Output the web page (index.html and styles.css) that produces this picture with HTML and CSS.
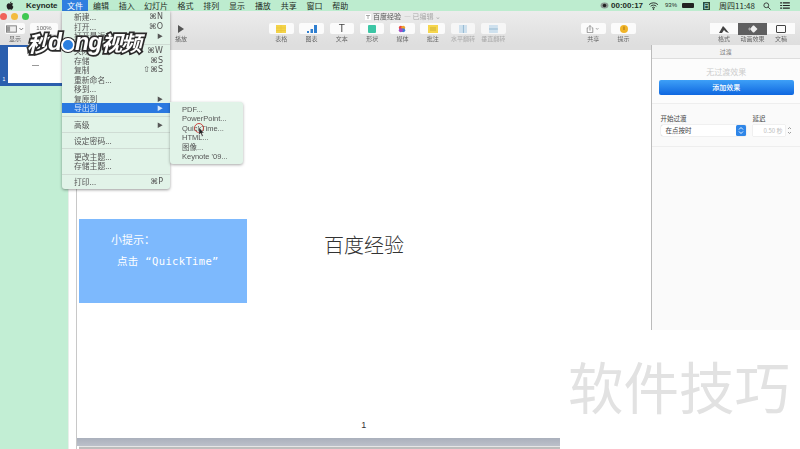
FILE: index.html
```html
<!DOCTYPE html>
<html lang="zh">
<head>
<meta charset="utf-8">
<title>Keynote</title>
<link rel="stylesheet" href="styles.css">
</head>
<body>
<div class="screen">
  <header class="menubar">
    <svg class="apple" viewBox="0 0 10 12"><path d="M7 0.5c0 1.2-1 2.2-2 2.2C5 1.5 6 .6 7 .5zM5 3.3c.6 0 1.2-.5 2.1-.5.8 0 1.5.4 2 1-1.500 1-1.300 3 .4 3.800C9 9.500 8 11.500 6.900 11.500c-.7 0-1-.4-1.800-.4s-1.100.4-1.800.4C2 11.500.5 9 .5 6.800.5 4.500 2 2.900 3.400 2.900c.7 0 1.200.4 1.600.4z"/></svg>
    <b class="app-name">Keynote</b>
    <span class="menu-title is-open">文件</span>
    <span class="menu-title">编辑</span>
    <span class="menu-title">插入</span>
    <span class="menu-title">幻灯片</span>
    <span class="menu-title">格式</span>
    <span class="menu-title">排列</span>
    <span class="menu-title">显示</span>
    <span class="menu-title">播放</span>
    <span class="menu-title">共享</span>
    <span class="menu-title">窗口</span>
    <span class="menu-title">帮助</span>
    <div class="status">
      <svg class="st-rec" viewBox="0 0 10 8"><ellipse cx="5" cy="4" rx="4.500" ry="3.500" fill="#8a9a92"/><circle cx="5" cy="4" r="2" fill="#222"/></svg>
      <b class="st-time">00:00:17</b>
      <svg class="st-wifi" viewBox="0 0 12 9"><path d="M1 3a7 7 0 0 1 10 0M2.800 4.800a4.500 4.500 0 0 1 6.400 0M4.500 6.500a2.200 2.200 0 0 1 3 0" fill="none" stroke="#222" stroke-width="1"/><circle cx="6" cy="8" r=".9" fill="#222"/></svg>
      <span class="st-pct">93%</span>
      <span class="st-batt"></span>
      <span class="st-box">日</span>
      <span class="st-clock">周四11:48</span>
      <svg class="st-search" viewBox="0 0 9 9"><circle cx="3.700" cy="3.700" r="2.700" fill="none" stroke="#333"/><path d="M5.700 5.700L8.500 8.500" stroke="#333"/></svg>
      <svg class="st-list" viewBox="0 0 11 8"><path d="M0 1h2M3 1h8M0 4h2M3 4h8M0 7h2M3 7h8" stroke="#222" stroke-width="1.200"/></svg>
    </div>
  </header>

  <section class="toolbar">
    <div class="lights"><i class="light red"></i><i class="light amber"></i><i class="light green"></i></div>
    <div class="doc-title"><svg class="doc-icon" viewBox="0 0 6 6"><rect width="6" height="6" fill="#fff"/><path d="M1 1.500h4M3 1.500v3.500" stroke="#888" stroke-width=".7"/></svg><span class="doc-name">百度经验</span><span class="doc-state"> — 已编辑 ⌄</span></div>
    <div class="tools">
      <div class="tool tool-view"><span class="btn"><svg class="ic" viewBox="0 0 20 8"><rect x=".5" y=".5" width="11" height="7" fill="#eee" stroke="#777"/><rect x="1" y="1" width="3.500" height="6" fill="#999"/><path d="M15 3l2 2 2-2" fill="none" stroke="#666"/></svg></span><small>显示</small></div>
      <div class="tool tool-zoom"><span class="btn">100%</span><small>缩放</small></div>
      <div class="tool tool-play"><span class="btn plain"><svg class="ic" viewBox="0 0 8 8"><path d="M1 0l6 4-6 4z" fill="#555"/></svg></span><small>播放</small></div>
      <div class="group group-insert">
        <div class="tool"><span class="btn"><svg class="ic" viewBox="0 0 10 8"><rect width="10" height="8" fill="#f3d34a"/><path d="M0 3h10M0 5.500h10M5 0v8" stroke="#e9c233" stroke-width=".6"/></svg></span><small>表格</small></div>
        <div class="tool"><span class="btn"><svg class="ic" viewBox="0 0 10 8"><rect x="0" y="6" width="2" height="2" fill="#2f7fd0"/><rect x="3.500" y="4" width="2.500" height="4" fill="#2f7fd0"/><rect x="7" y="0" width="3" height="8" fill="#2f7fd0"/></svg></span><small>图表</small></div>
        <div class="tool"><span class="btn glyph">T</span><small>文本</small></div>
        <div class="tool"><span class="btn"><svg class="ic" viewBox="0 0 8 8"><rect width="8" height="8" rx="1" fill="#3cc6a5"/></svg></span><small>形状</small></div>
        <div class="tool"><span class="btn"><svg class="ic" viewBox="0 0 10 10"><circle cx="3.500" cy="3.500" r="2.500" fill="#e8483a"/><circle cx="6.500" cy="3.500" r="2.500" fill="#f0a12c"/><circle cx="6.500" cy="6.500" r="2.500" fill="#3d7fd6"/><circle cx="3.500" cy="6.500" r="2.500" fill="#a24bc8"/></svg></span><small>媒体</small></div>
        <div class="tool"><span class="btn"><svg class="ic" viewBox="0 0 10 8"><rect width="10" height="8" fill="#f6d64e"/><path d="M2 3h6M2 5h6" stroke="#b79c2a" stroke-width=".6"/></svg></span><small>批注</small></div>
        <div class="tool dim"><span class="btn"><svg class="ic" viewBox="0 0 10 9"><rect width="10" height="9" fill="#cfe1ee"/><path d="M5 0v9" stroke="#8fb4cf"/></svg></span><small>水平翻转</small></div>
        <div class="tool dim"><span class="btn"><svg class="ic" viewBox="0 0 10 9"><rect width="10" height="9" fill="#cfe1ee"/><path d="M0 4.500h10" stroke="#8fb4cf"/></svg></span><small>垂直翻转</small></div>
      </div>
      <div class="group group-share">
        <div class="tool"><span class="btn"><svg class="ic" viewBox="0 0 18 10"><path d="M3 3.500h-1.500v6h7v-6H7M5 7V.8M3.500 2.200L5 .7l1.500 1.500" fill="none" stroke="#666" stroke-width=".8"/><path d="M12.500 4l1.500 1.500L15.500 4" fill="none" stroke="#666" stroke-width=".8"/></svg></span><small>共享</small></div>
        <div class="tool"><span class="btn"><svg class="ic" viewBox="0 0 8 8"><circle cx="4" cy="4" r="4" fill="#f0b429"/><path d="M4 1.500v3.500" stroke="#a5741a"/></svg></span><small>提示</small></div>
      </div>
      <div class="group group-seg">
        <div class="tool seg"><span class="btn"><svg class="ic" viewBox="0 0 10 8"><path d="M0 8l4-7 2 2 4 5-3-1-2-2-2 3z" fill="#444"/></svg></span><small>格式</small></div>
        <div class="tool seg is-on"><span class="btn"><svg class="ic" viewBox="0 0 10 8"><path d="M2 4l3-3.500h1L9.500 4 6 7.500H5z" fill="#eee"/><path d="M0 4l2-2v4z" fill="#aaa"/></svg></span><small>动画效果</small></div>
        <div class="tool seg"><span class="btn"><svg class="ic" viewBox="0 0 10 8"><rect x=".5" y=".5" width="9" height="7" rx=".5" fill="none" stroke="#444"/></svg></span><small>文稿</small></div>
      </div>
    </div>
  </section>

  <main class="workspace">
    <aside class="navigator">
      <div class="nav-selected">
        <span class="nav-num">1</span>
        <div class="thumb"><i class="thumb-line"></i></div>
      </div>
    </aside>
    <div class="gutter"></div>
    <div class="stage">
      <div class="slide">
        <div class="slide-row">
          <div class="tip">
            <p class="tip-head">小提示：</p>
            <p class="tip-body">点击 “QuickTime”</p>
          </div>
          <h1 class="slide-title">百度经验</h1>
        </div>
        <div class="slide-num">1</div>
      </div>
      <div class="band"></div>
      <div class="band-low"></div>
    </div>
    <aside class="inspector">
      <div class="insp-head">过渡</div>
      <div class="insp-effect">
        <p class="no-effect">无过渡效果</p>
        <div class="add-btn">添加效果</div>
      </div>
      <div class="insp-form">
        <div class="field field-start">
          <label>开始过渡</label>
          <div class="select"><span>在点按时</span><svg class="stepper" viewBox="0 0 10 11"><rect width="10" height="11" rx="1.500" fill="#2f86e8"/><path d="M3 4.500l2-2 2 2M3 6.500l2 2 2-2" fill="none" stroke="#fff" stroke-width=".9"/></svg></div>
        </div>
        <div class="field field-delay">
          <label>延迟</label>
          <div class="delay"><span class="delay-input">0.50 秒</span><svg class="delay-step" viewBox="0 0 5 11"><path d="M1 4l1.500-1.500L4 4M1 7l1.500 1.500L4 7" fill="none" stroke="#888" stroke-width=".8"/></svg></div>
        </div>
      </div>
    </aside>
  </main>

  <nav class="menu">
    <div class="item"><span>新建...</span><kbd>⌘N</kbd></div>
    <div class="item"><span>打开...</span><kbd>⌘O</kbd></div>
    <div class="item"><span>打开最近使用</span><em>▶</em></div>
    <hr>
    <div class="item"><span>关闭</span><kbd>⌘W</kbd></div>
    <div class="item"><span>存储</span><kbd>⌘S</kbd></div>
    <div class="item"><span>复制</span><kbd>⇧⌘S</kbd></div>
    <div class="item"><span>重新命名...</span></div>
    <div class="item"><span>移到...</span></div>
    <div class="item"><span>复原到</span><em>▶</em></div>
    <div class="item is-active"><span>导出到</span><em>▶</em></div>
    <hr>
    <div class="item"><span>高级</span><em>▶</em></div>
    <hr>
    <div class="item"><span>设定密码...</span></div>
    <hr>
    <div class="item"><span>更改主题...</span></div>
    <div class="item"><span>存储主题...</span></div>
    <hr>
    <div class="item"><span>打印...</span><kbd>⌘P</kbd></div>
  </nav>

  <nav class="submenu">
    <div class="sub-item">PDF...</div>
    <div class="sub-item">PowerPoint...</div>
    <div class="sub-item">QuickTime...</div>
    <div class="sub-item">HTML...</div>
    <div class="sub-item">图像...</div>
    <div class="sub-item">Keynote '09...</div>
  </nav>

  <div class="cursor-ring"></div>
  <svg class="cursor" viewBox="0 0 8 11"><path d="M1 0v9l2-2 1.500 3.500 1.500-.6L4.500 6.500H7z" fill="#222" stroke="#fff" stroke-width=".5"/></svg>

  <div class="logo"><span>秒</span><span class="logo-lat">d</span><i class="logo-play"></i><span class="logo-lat">ng</span><span class="logo-end">视频</span></div>

  <div class="watermark">软件技巧</div>
</div>
</body>
</html>
```

FILE: styles.css
```css
* { box-sizing: border-box; }
html, body { margin: 0; padding: 0; }
body {
  width: 800px;
  height: 449px;
  overflow: hidden;
  background: #fff;
  font-family: "Noto Sans CJK SC", "Liberation Sans", sans-serif;
}
p, h1 { margin: 0; font-weight: 400; }
.screen {
  position: relative;
  width: 800px;
  height: 449px;
  overflow: hidden;
  display: flex;
  flex-direction: column;
  filter: blur(0.35px);
}

/* menu bar */
.menubar {
  flex: none;
  height: 11px;
  background: #bdeccf;
  display: flex;
  align-items: center;
  font-size: 8px;
  line-height: 11px;
  color: #1f2d26;
  white-space: nowrap;
}
.apple { width: 8px; height: 9px; margin-left: 6px; flex: none; fill: #222; }
.app-name { margin-left: 12px; width: 36px; font: 700 8px/11px "Liberation Sans", sans-serif; color: #1d2a24; }
.menu-title { width: 25.800px; text-align: center; flex: none; }
.menu-title.is-open { background: #2f7fe0; color: #fff; width: 26px; }
.menu-title:nth-of-type(4) { width: 33px; }
.status { margin-left: auto; display: flex; align-items: center; height: 11px; }
.st-rec { width: 9px; height: 7px; }
.st-time { margin-left: 2px; font: 700 8px/11px "Liberation Sans", sans-serif; width: 32px; }
.st-wifi { width: 11px; height: 8px; margin-left: 5px; }
.st-pct { font: 6px/11px "Liberation Sans", sans-serif; margin-left: 6px; width: 16px; }
.st-batt { width: 12px; height: 5px; background: #222; border-radius: 1px; margin-left: 1px; }
.st-box { width: 7px; height: 8px; margin-left: 9px; background: #2c4a3c; color: #cfe; font-size: 6px; line-height: 8px; text-align: center; }
.st-clock { margin-left: 9px; font-size: 8px; width: 38px; }
.st-search { width: 8px; height: 8px; margin-left: 6px; }
.st-list { width: 10px; height: 7px; margin: 0 10px 0 9px; }

/* window toolbar */
.toolbar {
  position: relative;
  flex: none;
  height: 34px;
  background: linear-gradient(#ececec, #dedede);
  padding-top: 12px;
}
.lights { position: absolute; left: 0; top: 2px; display: flex; gap: 4px; }
.light { width: 7px; height: 7px; border-radius: 50%; }
.light.red { background: #f0625a; }
.light.amber { background: #f3bb3e; }
.light.green { background: #3fc850; }
.doc-title {
  position: absolute;
  left: 365px;
  top: 1px;
  display: flex;
  align-items: center;
  gap: 2px;
  font-size: 7px;
  line-height: 9px;
  white-space: nowrap;
}
.doc-icon { width: 6px; height: 6px; }
.doc-name { color: #555; }
.doc-state { color: #aaa; margin-left: 1px; }
.tools { display: flex; align-items: flex-start; }
.group { display: flex; gap: 5.800px; }
.group-insert { margin-left: 79px; }
.group-share { margin-left: 75.500px; }
.group-seg { margin-left: 74px; gap: 0; }
.tool { width: 24.500px; display: flex; flex-direction: column; align-items: center; flex: none; }
.tool small { display: block; font-size: 6px; line-height: 8px; margin-top: 1px; color: #666; white-space: nowrap; }
.tool.dim small { color: #aaa; }
.btn {
  width: 100%;
  height: 11px;
  background: #fbfbfb;
  border-radius: 2px;
  display: flex;
  align-items: center;
  justify-content: center;
  font: 6px/11px "Liberation Sans", sans-serif;
  color: #666;
}
.btn.plain { background: transparent; }
.btn.glyph { font-size: 10px; color: #444; }
.ic { height: 8px; width: auto; max-width: 18px; }
.tool-view { width: 20px; margin-left: 5px; }
.tool-zoom { width: 28px; margin-left: 5px; }
.tool-play { width: 18px; margin-left: 114px; }
.group-insert .tool:nth-child(n+7) .btn { background: #f6f6f6; }
.group-seg .seg { width: 28.500px; }
.seg .btn { border-radius: 0; }
.seg.is-on .btn { background: #5f5f60; height: 12px; }
.seg.is-on small { margin-top: 0; }

/* workspace */
.workspace { flex: 1; min-height: 0; display: flex; }
.navigator { flex: none; width: 68px; background: #c2eed4; }
.nav-selected {
  height: 41px;
  background: #2b5fae;
  display: flex;
  align-items: flex-end;
  padding: 2px 0 3px;
}
.nav-num { width: 8px; color: #fff; font: 5px/8px "Liberation Sans", sans-serif; text-align: center; flex: none; }
.thumb { width: 54px; height: 36px; background: #fff; display: flex; align-items: center; justify-content: center; }
.thumb-line { width: 7px; height: 1px; background: #999; }
.gutter { flex: none; width: 9px; background: #fff; border-left: 1px solid #e8efea; border-right: 1px solid #c8c8c8; }
.stage {
  flex: none;
  width: 573.500px;
  display: flex;
  flex-direction: column;
  background: #fff;
  padding-top: 5px;
  position: relative;
  box-shadow: inset 0 5px 0 #dedede;
}
.slide { flex: 1; display: flex; flex-direction: column; }
.slide-row { display: flex; align-items: flex-start; margin-top: 169px; margin-left: 2px; }
.tip { width: 168px; height: 84px; background: #7db9fd; color: #fff; padding: 12px 0 0 32px; }
.tip-head { font-size: 11px; line-height: 16px; }
.tip-body { font: 10.500px/16px "DejaVu Sans Mono", "Noto Sans CJK SC", monospace; letter-spacing: .35px; margin-top: 6px; margin-left: 6px; white-space: nowrap; }
.slide-title { margin-left: 77px; margin-top: 12px; font-size: 20px; line-height: 28px; color: #333; font-weight: 300; }
.slide-num { margin-top: auto; margin-bottom: 6px; text-align: center; font: 9px/14px "Liberation Sans", sans-serif; color: #333; }
.band { flex: none; height: 8px; background: linear-gradient(#aab0bc, #bcc0ca); }
.band-low { flex: none; height: 3px; background: #bdbdbd; margin-left: 2px; border-top: 1px solid #e6e6e6; }

/* inspector */
.inspector {
  flex: none;
  width: 149.500px;
  background: #fafafa;
  border-left: 1px solid #bbb;
  color: #444;
}
.insp-head {
  height: 14px;
  background: #f3f3f3;
  border-bottom: 1px solid #ddd;
  text-align: center;
  font-size: 6px;
  line-height: 13px;
  color: #777;
}
.insp-effect { padding: 6px 6px 8px 7px; border-bottom: 1px solid #eee; background: #fcfcfc; }
.no-effect { text-align: center; font-size: 8px; line-height: 14px; color: #ccc; }
.add-btn {
  margin-top: 1px;
  height: 15px;
  border-radius: 2px;
  background: linear-gradient(#3ea0f7, #0f67e0);
  color: #fff;
  font-size: 7px;
  line-height: 15px;
  text-align: center;
  font-weight: 500;
}
.insp-form { display: flex; padding: 9px 5px 10px 9px; border-bottom: 1px solid #eee; }
.field label { display: block; font-size: 6.500px; line-height: 10px; color: #444; }
.field-start { width: 92px; }
.select {
  margin-top: 2px;
  width: 85px;
  height: 11px;
  background: #fff;
  border-radius: 2px;
  box-shadow: 0 0 1px #999;
  display: flex;
  justify-content: space-between;
  font-size: 6.500px;
  line-height: 11px;
  padding-left: 5px;
  color: #444;
}
.stepper { width: 10px; height: 11px; flex: none; }
.delay { margin-top: 2px; display: flex; gap: 2px; }
.delay-input {
  width: 32px;
  height: 11px;
  background: #fff;
  box-shadow: 0 0 1px #bbb;
  font: 6px/11px "Noto Sans CJK SC", sans-serif;
  color: #bbb;
  text-align: right;
  padding-right: 2px;
}
.delay-step { width: 5px; height: 11px; flex: none; }

/* open menu */
.menu {
  position: absolute;
  left: 62px;
  top: 11px;
  width: 108px;
  height: 178px;
  padding-top: 1px;
  background: #e1f3e8;
  border-radius: 0 0 3px 3px;
  box-shadow: 0 1px 3px rgba(0,0,0,.4);
  font-size: 7.800px;
  color: #555;
}
.menu hr { border: 0; margin: 0; height: 6.500px; position: relative; }
.menu hr::after { content: ""; display: block; position: relative; top: 3px; height: 1px; background: #cfdcd4; }
.menu hr:nth-of-type(1) { height: 5.500px; }
.item {
  height: 9.500px;
  line-height: 9.500px;
  padding: 0 7px 0 12px;
  display: flex;
  justify-content: space-between;
  align-items: center;
  white-space: nowrap;
}
.item kbd { font: 8px/9.500px "DejaVu Sans", sans-serif; color: #555; }
.item em { font-style: normal; font-size: 6px; color: #555; }
.item.is-active { background: #2a78e0; color: #d5e6fb; height: 10px; }
.item.is-active em { color: #d5e6fb; }
.submenu {
  position: absolute;
  left: 170px;
  top: 102px;
  width: 73px;
  height: 62px;
  padding: 2.500px 0 0 12px;
  background: #e1f3e8;
  border-radius: 0 3px 3px 3px;
  box-shadow: 0 1px 3px rgba(0,0,0,.35);
  font: 7.500px/9.500px "Liberation Sans", "Noto Sans CJK SC", sans-serif;
  color: #555;
}
.sub-item { height: 9.500px; white-space: nowrap; }
.cursor-ring {
  position: absolute;
  left: 194px;
  top: 123px;
  width: 10px;
  height: 10px;
  border: 1.300px solid #c8453f;
  border-radius: 50%;
}
.cursor { position: absolute; left: 198px; top: 127px; width: 7px; height: 10px; }

/* overlays */
.logo {
  position: absolute;
  left: 27px;
  top: 27px;
  height: 30px;
  display: flex;
  align-items: center;
  font: italic 700 22px/30px "Noto Sans CJK SC", sans-serif;
  color: #fff;
  -webkit-text-stroke: 3.500px #2a2a2a;
  paint-order: stroke fill;
  white-space: nowrap;
  letter-spacing: -1px;
  filter: drop-shadow(0 0 .6px #fff);
}
.logo-lat { font-family: "Liberation Sans", sans-serif; font-size: 23px; }
.logo-end { font-size: 21px; letter-spacing: -1.500px; }
.logo-play {
  width: 14px;
  height: 14px;
  margin: 5px 0 0 0;
  flex: none;
  border-radius: 50%;
  background: #2a7fe0;
  border: 2px solid #fff;
  box-shadow: 0 0 0 1px #222;
}
.watermark {
  position: absolute;
  right: 0;
  bottom: 0;
  width: 240px;
  height: 119px;
  background: #fff;
  padding: 20px 0 0 8px;
  font-size: 55.500px;
  line-height: 70px;
  color: #e2e2e2;
  white-space: nowrap;
}
```
